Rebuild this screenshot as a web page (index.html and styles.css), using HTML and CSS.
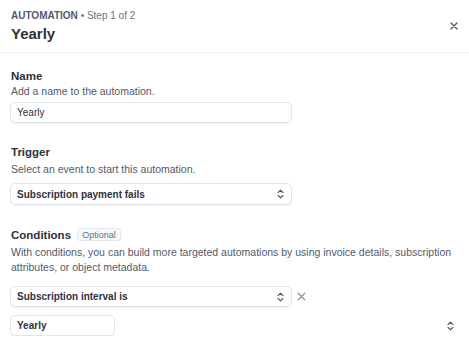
FILE: index.html
```html
<!DOCTYPE html>
<html lang="en">
<head>
  <meta charset="UTF-8">
  <title>Automation</title>
  <link rel="stylesheet" href="styles.css">
</head>
<body>
  <header class="head">
    <div class="head-text">
      <div class="eyebrow"><span class="eyebrow-main">AUTOMATION</span> <span class="eyebrow-sub">&bull; Step 1 of 2</span></div>
      <h1 class="title">Yearly</h1>
    </div>
    <button class="close" aria-label="Close">
      <svg width="8" height="8" viewBox="0 0 8 8"><path d="M1 1L7 7M7 1L1 7" stroke="#545969" stroke-width="1.4" stroke-linecap="round"/></svg>
    </button>
  </header>

  <main class="body">
    <section class="field field-name">
      <div class="label">Name</div>
      <div class="desc">Add a name to the automation.</div>
      <div class="box box-wide">Yearly</div>
    </section>

    <section class="field">
      <div class="label">Trigger</div>
      <div class="desc">Select an event to start this automation.</div>
      <div class="box box-wide box-select">
        <span>Subscription payment fails</span>
        <svg class="chev" width="7" height="10" viewBox="0 0 7 10"><path d="M1 3.6L3.5 1.2L6 3.6M1 6.4L3.5 8.8L6 6.4" fill="none" stroke="#545969" stroke-width="1.2" stroke-linecap="round" stroke-linejoin="round"/></svg>
      </div>
    </section>

    <section class="field field-cond">
      <div class="label">Conditions <span class="badge">Optional</span></div>
      <div class="desc">With conditions, you can build more targeted automations by using invoice details, subscription attributes, or object metadata.</div>
      <div class="cond-row">
        <div class="box box-wide box-select">
          <span>Subscription interval is</span>
          <svg class="chev" width="7" height="10" viewBox="0 0 7 10"><path d="M1 3.6L3.5 1.2L6 3.6M1 6.4L3.5 8.8L6 6.4" fill="none" stroke="#545969" stroke-width="1.2" stroke-linecap="round" stroke-linejoin="round"/></svg>
        </div>
        <svg class="remove" width="9" height="9" viewBox="0 0 9 9"><path d="M1 1L8 8M8 1L1 8" stroke="#8792a2" stroke-width="1.1" stroke-linecap="round"/></svg>
      </div>
      <div class="value-row">
        <div class="box box-small box-bold">Yearly</div>
        <svg class="chev" width="7" height="10" viewBox="0 0 7 10"><path d="M1 3.6L3.5 1.2L6 3.6M1 6.4L3.5 8.8L6 6.4" fill="none" stroke="#545969" stroke-width="1.2" stroke-linecap="round" stroke-linejoin="round"/></svg>
      </div>
    </section>
  </main>
</body>
</html>
```

FILE: styles.css
```css
body {
  margin: 0;
  font-family: "Liberation Sans", Arial, sans-serif;
  color: #30313d;
  background: #fff;
}
.head {
  display: flex;
  justify-content: space-between;
  align-items: flex-start;
  box-sizing: border-box;
  height: 53px;
  padding: 10px 10px 0 11px;
  border-bottom: 1px solid #ebeef1;
}
.eyebrow {
  font-size: 10px;
  line-height: 12px;
  color: #545969;
}
.eyebrow-main {
  font-weight: bold;
}
.eyebrow-sub {
  color: #6a7383;
}
.title {
  margin: 3px 0 0;
  font-size: 15px;
  line-height: 18px;
  font-weight: bold;
}
.close {
  border: none;
  background: none;
  padding: 0;
  margin-top: 11px;
  width: 10px;
  height: 10px;
  display: flex;
  align-items: center;
  justify-content: center;
}
.body {
  padding: 0 10px;
}
.field {
  margin-top: 22px;
}
.field-name {
  margin-top: 16px;
}
.field-cond {
  margin-top: 23px;
}
.label {
  font-size: 11.5px;
  line-height: 15px;
  font-weight: bold;
  padding-left: 1px;
}
.badge {
  display: inline-block;
  margin-left: 3px;
  padding: 0 4px;
  height: 13px;
  line-height: 12px;
  font-size: 9px;
  font-weight: normal;
  color: #6a7383;
  background: #f6f8fa;
  border: 1px solid #e3e8ee;
  border-radius: 3px;
  box-sizing: border-box;
  vertical-align: 1px;
}
.desc {
  font-size: 10.5px;
  line-height: 14.5px;
  color: #545969;
  padding-left: 1px;
  margin: 2px 0 7px;
}
.field-name .desc {
  margin: 0 0 3px;
}
.box {
  box-sizing: border-box;
  height: 21px;
  display: flex;
  align-items: center;
  justify-content: space-between;
  padding: 0 6px;
  font-size: 10px;
  border: 1px solid #e0e5eb;
  border-radius: 5px;
  box-shadow: 0 1px 1px rgba(0, 0, 0, 0.06);
  background: #fff;
}
.box-wide {
  width: 282px;
}
.box-select {
  font-weight: bold;
  height: 22px;
}
.box-small {
  width: 105px;
}
.box-bold {
  font-weight: bold;
}
.chev {
  margin-right: 1px;
}
.cond-row {
  display: flex;
  align-items: center;
  gap: 5px;
  margin-top: 12px;
}
.cond-row .box-select {
  height: 21px;
}
.value-row {
  display: flex;
  align-items: center;
  justify-content: space-between;
  margin-top: 8px;
  padding-right: 4px;
}
```
